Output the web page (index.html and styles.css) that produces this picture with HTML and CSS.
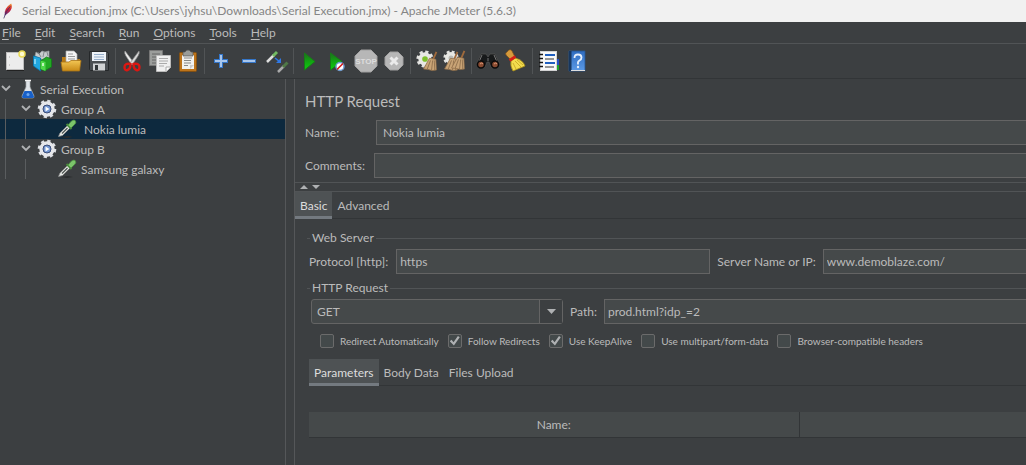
FILE: index.html
```html
<!DOCTYPE html>
<html lang="en">
<head>
<meta charset="utf-8">
<title>Serial Execution.jmx - Apache JMeter (5.6.3)</title>
<link rel="stylesheet" href="styles.css">
</head>
<body>
<svg class="defs" aria-hidden="true">
  <defs>
    <linearGradient id="green" x1="0" y1="0" x2="0" y2="1"><stop offset="0" stop-color="#1d6e1d"/><stop offset=".5" stop-color="#12a512"/><stop offset="1" stop-color="#0fd00f"/></linearGradient>
    <linearGradient id="gold" x1="0" y1="0" x2="0" y2="1"><stop offset="0" stop-color="#f2c654"/><stop offset="1" stop-color="#c98a16"/></linearGradient>
    <linearGradient id="book" x1="0" y1="0" x2="0" y2="1"><stop offset="0" stop-color="#2f6cc0"/><stop offset="1" stop-color="#5c9ae6"/></linearGradient>
    <linearGradient id="quill" x1="0" y1="0" x2="0" y2="1"><stop offset="0" stop-color="#f0902a"/><stop offset=".45" stop-color="#d22235"/><stop offset="1" stop-color="#5d2a80"/></linearGradient>
    <symbol id="gear" viewBox="0 0 20 20">
      <circle cx="10" cy="10" r="8" fill="none" stroke="#dcdee2" stroke-width="2.6" stroke-dasharray="3.2 3.083"/>
      <circle cx="10" cy="10" r="5.9" fill="#3b62a8" stroke="#e6e7ea" stroke-width="3.6"/>
      <circle cx="10" cy="10" r="4" fill="#7396d2" stroke="#3c4d76" stroke-width="1"/>
      <path d="M8.5 7.5v5l4-2.5z" fill="#fff"/>
    </symbol>
    <symbol id="dropper" viewBox="0 0 20 20">
      <path d="M3 18l8-1 5 1-6 1z" fill="#2b2d2e"/>
      <path d="M1.500 17.500l1.500-3.500 8-8 2.500 2.500-8 8z" fill="#e6e9e6" stroke="#888" stroke-width=".7"/>
      <path d="M5 14.500l5.500-5.500" stroke="#4e5452" stroke-width="1.200"/>
      <path d="M9.500 5l5 5" stroke="#4a8a3c" stroke-width="2"/>
      <path d="M11 6l3.500-4q3-2 4 0t-1 3.500L14 9z" fill="#7cc46b" stroke="#4c9440" stroke-width=".8"/>
    </symbol>
    <symbol id="cogwheel" viewBox="0 0 14 14">
      <circle cx="7" cy="7" r="5.500" fill="none" stroke="#e2e2df" stroke-width="2.400" stroke-dasharray="2.400 1.920"/>
      <circle cx="7" cy="7" r="3.700" fill="#7fc02c" stroke="#e8e8e4" stroke-width="3"/>
    </symbol>
    <symbol id="cog-plain" viewBox="0 0 14 14">
      <circle cx="7" cy="7" r="5.500" fill="none" stroke="#e2e2df" stroke-width="2.400" stroke-dasharray="2.400 1.920"/>
      <circle cx="7" cy="7" r="3.700" fill="#b9bab6" stroke="#e8e8e4" stroke-width="3"/>
    </symbol>
    <symbol id="broom" viewBox="0 0 14 18">
      <path d="M12.500 0L9.500 7" stroke="#a06a3c" stroke-width="1.700"/>
      <path d="M6 6l6 1 .5 10-4 .5-3.500-1-4.500-.5z" fill="#c9a476" stroke="#8e6d48" stroke-width=".7"/>
      <path d="M7 8l-3 8M9 8l-1 9M10.500 8l.5 9" stroke="#8b6d4b" stroke-width=".8"/>
    </symbol>
    <symbol id="chevron" viewBox="0 0 12 12"><path d="M2 3l4 4 4-4" fill="none" stroke="#afb1b3" stroke-width="1.800"/></symbol>
  </defs>
</svg>

<header class="titlebar">
  <svg class="app-icon" viewBox="0 0 14 18" aria-hidden="true"><path d="M11 1q2 5-2 9l-5 4Q3 6 11 1z" fill="url(#quill)"/><path d="M10 4Q5 9 3 17" fill="none" stroke="#3b2a60" stroke-width=".8"/></svg>
  <h1 class="title">Serial Execution.jmx (C:\Users\jyhsu\Downloads\Serial Execution.jmx) - Apache JMeter (5.6.3)</h1>
</header>

<nav class="menubar">
  <button class="menu"><u>F</u>ile</button>
  <button class="menu"><u>E</u>dit</button>
  <button class="menu"><u>S</u>earch</button>
  <button class="menu"><u>R</u>un</button>
  <button class="menu"><u>O</u>ptions</button>
  <button class="menu"><u>T</u>ools</button>
  <button class="menu"><u>H</u>elp</button>
</nav>

<div class="toolbar" role="toolbar" aria-label="Main">
  <button class="tool" aria-label="New"><svg viewBox="0 0 24 24"><rect x="3.500" y="3.500" width="17" height="17" fill="#ececec" stroke="#bdbdbd"/><path d="M6 8h1M6 16h1" stroke="#aaa"/><path d="M4 21.500h17" stroke="#222"/><circle cx="19" cy="5" r="3" fill="#fffbd0" stroke="#eadb55" stroke-width="1.500"/></svg></button>
  <button class="tool" aria-label="Templates"><svg viewBox="0 0 24 24"><path d="M4 7l1-4 3 2 3-3 3 1 4-1v7l-6 2z" fill="#c6cbcd" stroke="#92989b" stroke-width=".7"/><path d="M7 3l3 5M13 3l-1 5M16 3l1 4" stroke="#74797c" stroke-width=".8"/><path d="M2.500 7l7 2v13l-7-5z" fill="#21a7df" stroke="#0878b0" stroke-width=".8"/><path d="M4 10v5" stroke="#b7edff" stroke-width="1.200"/><path d="M9.500 12l6-4 5 2v8l-7 4-4-2z" fill="#22a823" stroke="#117c16" stroke-width=".8"/><path d="M9.500 11.500l5 1.500v9l-5-2z" fill="#4fd84a"/><path d="M12 14v3" stroke="#e6ffe2" stroke-width="1.500"/></svg></button>
  <button class="tool" aria-label="Open"><svg viewBox="0 0 24 24"><path d="M3 8h5l2 2h11v11H3z" fill="#b77a16"/><path d="M7 2h8l3 3v11H7z" fill="#f4f4f4" stroke="#aaa" stroke-width=".7"/><path d="M9 5h5M9 7.500h7M9 10h7" stroke="#999"/><path d="M2 13h8l2-1.500h10L20.500 22h-17z" fill="url(#gold)" stroke="#a87315" stroke-width=".8"/></svg></button>
  <button class="tool" aria-label="Save"><svg viewBox="0 0 24 24"><path d="M2.500 2.500h17.500l1.500 2v17h-18l-1-1z" fill="#4b4f53" stroke="#25282a"/><rect x="5" y="3" width="14" height="9" fill="#edf2f8"/><path d="M7 5.500h10M7 8h10M7 10.500h10" stroke="#95aecb"/><rect x="6" y="14.500" width="12" height="7" fill="#d0d2d4"/><rect x="8" y="16" width="3" height="5" fill="#33373a"/></svg></button>
  <span class="sep"></span>
  <button class="tool" aria-label="Cut"><svg viewBox="0 0 24 24"><path d="M5 2q-1 2 1 5l6 9 2-2z" fill="#efefef" stroke="#999" stroke-width=".7"/><path d="M19 2q1 2-1 5l-6 9-2-2z" fill="#dadada" stroke="#888" stroke-width=".7"/><path d="M10.500 15q-6-1-6 3 0 4 3 3 3-1 3-6zM13.500 15q6-1 6 3 0 4-3 3-3-1-3-6z" fill="none" stroke="#dc1712" stroke-width="2.400"/></svg></button>
  <button class="tool" aria-label="Copy"><svg viewBox="0 0 24 24"><path d="M1.500 1.500h13v15h-13z" fill="#9b9d9b" stroke="#777"/><path d="M4 5h8M4 8h6M4 11h5M4 14h4" stroke="#666"/><path d="M8.500 6.500h14v12l-4 4h-10z" fill="#efefef" stroke="#bbb"/><path d="M11 9.500h9M11 12h9M11 14.500h8M11 17h5" stroke="#aaa"/><path d="M18 22v-4h4" fill="#fff" stroke="#aaa"/></svg></button>
  <button class="tool" aria-label="Paste"><svg viewBox="0 0 24 24"><rect x="3.500" y="3.500" width="17" height="19" rx="1" fill="#bd741b" stroke="#825014"/><path d="M6 6h12v14H6z" fill="#f2f2f0"/><path d="M8 9h8M8 11.500h7M8 14h7M8 16.500h4" stroke="#888"/><path d="M14 20v-4h4" fill="#ccc"/><path d="M7 7V3h2q1-2 3-2t3 2h2v4z" fill="#9a9c99" stroke="#555" stroke-width=".7"/></svg></button>
  <span class="sep"></span>
  <button class="tool" aria-label="Expand all"><svg viewBox="0 0 24 24"><path d="M12 5v14M5 12h14" stroke="#3576c8" stroke-width="4"/><path d="M12 6v12M6 12h12" stroke="#a8c6ec" stroke-width="2"/></svg></button>
  <button class="tool" aria-label="Collapse all"><svg viewBox="0 0 24 24"><path d="M5 12h14" stroke="#3576c8" stroke-width="4"/><path d="M6 12h12" stroke="#a8c6ec" stroke-width="2"/></svg></button>
  <button class="tool" aria-label="Toggle"><svg viewBox="0 0 24 24"><path d="M2 13l7-7" stroke="#dedede" stroke-width="2.500"/><path d="M8 7l4-4" stroke="#72ba62" stroke-width="3"/><path d="M10 9l5 4" stroke="#2f79e6" stroke-width="1.600"/><path d="M11 14h5V9z" fill="#2f79e6"/><path d="M13 23l6-6" stroke="#aaa" stroke-width="2.500"/><path d="M18 18l4.500-4.500" stroke="#4f7846" stroke-width="3"/></svg></button>
  <span class="sep"></span>
  <button class="tool" aria-label="Start"><svg viewBox="0 0 24 24"><path d="M6.500 4v17L17 12.500z" fill="url(#green)" stroke="#187b18"/></svg></button>
  <button class="tool" aria-label="Start no pauses"><svg viewBox="0 0 24 24"><path d="M4.500 4v17L16 12.500z" fill="url(#green)" stroke="#187b18"/><circle cx="14" cy="17.500" r="4" fill="#fff" stroke="#6f9cd0" stroke-width="1.500"/><path d="M11 20.500l6-6" stroke="#d31818" stroke-width="1.600"/></svg></button>
  <button class="tool" aria-label="Stop" disabled><svg viewBox="0 0 24 24"><path d="M7 1h10l6 6v10l-6 6H7l-6-6V7z" fill="#b7b7b7" stroke="#a0a0a0"/><text class="stop-text" x="12" y="15" text-anchor="middle">STOP</text></svg></button>
  <button class="tool" aria-label="Shutdown" disabled><svg viewBox="0 0 24 24"><path d="M8 3h8l5 5v8l-5 5H8l-5-5V8z" fill="#b7b7b7" stroke="#a0a0a0"/><path d="M8.500 8.500l7 7M15.500 8.500l-7 7" stroke="#ebebeb" stroke-width="3"/></svg></button>
  <span class="sep"></span>
  <button class="tool" aria-label="Clear"><svg viewBox="0 0 24 24"><use href="#cogwheel" x="1" y="1" width="18" height="18"/><use href="#broom" x="8" y="2" width="15" height="21"/></svg></button>
  <button class="tool" aria-label="Clear all"><svg viewBox="0 0 24 24"><use href="#cog-plain" x="0" y="1" width="16" height="16"/><use href="#broom" x="1" y="2" width="15" height="21"/><use href="#broom" x="8" y="1" width="15" height="21"/></svg></button>
  <span class="sep"></span>
  <button class="tool" aria-label="Search"><svg viewBox="0 0 24 24"><path d="M5 5h5l2 3 2-3h5l4 9-4 4h-4l-2-5h-2l-2 5H5l-4-4z" fill="#17191a" stroke="#555" stroke-width=".7"/><path d="M6 6l-3 7M18 6l3 7M12 9v3" stroke="#777"/><circle cx="5" cy="15.500" r="3.500" fill="#8a4b31" stroke="#0b0b0b" stroke-width="1.500"/><circle cx="19" cy="15.500" r="3.500" fill="#8a4b31" stroke="#0b0b0b" stroke-width="1.500"/><path d="M4 15q2-2 3 0M18 15q2-2 3 0" fill="none" stroke="#dc9978"/></svg></button>
  <button class="tool" aria-label="Reset search"><svg viewBox="0 0 24 24"><path d="M3 3q3-4 5-1l3 6-4 3-5-5q-1-2 1-3z" fill="#d59a3c" stroke="#80501a" stroke-width=".7"/><path d="M11 9q8 2 10 8l-12 5Q6 17 7 12z" fill="#f2dc4e" stroke="#a98e16" stroke-width=".8"/><path d="M11 12l6 6M9 14l3 6M13 11l6 5" stroke="#c2a222" stroke-width=".8"/><path d="M5.500 11.500l6-4" stroke="#d32018" stroke-width="2.800"/></svg></button>
  <span class="sep"></span>
  <button class="tool" aria-label="Function helper"><svg viewBox="0 0 24 24"><path d="M18 10h4v11h-4z" fill="#1fa42a"/><path d="M18 10h4v6h-4z" fill="#2450c4"/><rect x="3.500" y="2.500" width="16" height="19" fill="#f8f8f8" stroke="#d2d2d2"/><path d="M8 6h10M8 14h10" stroke="#1f5fc0" stroke-width="1.800"/><path d="M8 10h9M8 18h9" stroke="#333" stroke-width="1.200"/><path d="M2 5.500h4M2 9.500h4M2 13.500h4M2 17.500h4" stroke="#151515" stroke-width="1.500"/></svg></button>
  <button class="tool" aria-label="Help"><svg viewBox="0 0 24 24"><path d="M4 2h16v20H4z" fill="url(#book)" stroke="#27558f" stroke-width=".8"/><path d="M4 2h2.500v20H4z" fill="#17375f"/><path d="M6 21.500h14" stroke="#ddd"/><path d="M9.500 9q0-3.500 3.500-3.500t3.500 3q0 2-2 3T13 15v.5" fill="none" stroke="#e4effc" stroke-width="1.800"/><circle cx="13" cy="18" r="1.200" fill="#e4effc"/></svg></button>
</div>

<main class="workspace">
  <ul class="tree" role="tree" aria-label="Test plan">
    <li class="row" role="treeitem"><svg class="chev"><use href="#chevron"/></svg><svg class="node root-icon" viewBox="0 0 16 20"><path d="M6 2h4v6l4 9q.5 2-1.500 2h-9q-2 0-1.500-2L6 8z" fill="#dfe4e8" stroke="#a4a9ac" stroke-width=".7"/><path d="M4.500 12h7l2.500 5.500q0 1.500-1.500 1.500h-9q-1.500 0-1.500-1.500z" fill="#1760c9"/><path d="M5 1.500h6" stroke="#f4f4f4" stroke-width="1.500"/><circle cx="8" cy="15.500" r="1.500" fill="#6ba6ef"/></svg><span class="label">Serial Execution</span></li>
    <li class="row" role="treeitem"><span class="guide"></span><svg class="chev"><use href="#chevron"/></svg><svg class="node"><use href="#gear"/></svg><span class="label">Group A</span></li>
    <li class="row selected" role="treeitem" aria-selected="true"><span class="guide"></span><span class="guide"></span><svg class="node leaf"><use href="#dropper"/></svg><span class="label">Nokia lumia</span></li>
    <li class="row" role="treeitem"><span class="guide"></span><svg class="chev"><use href="#chevron"/></svg><svg class="node"><use href="#gear"/></svg><span class="label">Group B</span></li>
    <li class="row" role="treeitem"><span class="guide"></span><span class="guide"></span><svg class="node leaf"><use href="#dropper"/></svg><span class="label">Samsung galaxy</span></li>
  </ul>

  <section class="editor">
    <div class="intro">
      <h2 class="heading">HTTP Request</h2>
      <div class="line"><label class="name-label" for="name">Name:</label><input class="field" id="name" type="text" value="Nokia lumia"></div>
      <div class="line"><label class="comments-label" for="comments">Comments:</label><input class="field" id="comments" type="text"></div>
    </div>
    <div class="splitter">
      <svg class="arrows" viewBox="0 0 20 8" aria-hidden="true"><path d="M0 6l4-4 4 4zM12 2h8l-4 4z" fill="#afb1b3"/></svg>
    </div>
    <div class="tabs" role="tablist">
      <button class="tab active" role="tab" aria-selected="true">Basic</button>
      <button class="tab" role="tab">Advanced</button>
    </div>
    <div class="panel">
      <fieldset class="group">
        <legend>Web Server</legend>
        <div class="server">
          <label for="protocol">Protocol [http]:</label><input class="field tight protocol" id="protocol" type="text" value="https">
          <label class="next" for="server">Server Name or IP:</label><input class="field tight" id="server" type="text" value="www.demoblaze.com/">
        </div>
      </fieldset>
      <fieldset class="group request">
        <legend>HTTP Request</legend>
        <div class="server path-line">
          <span class="combo"><select class="method" aria-label="Method"><option>GET</option></select><svg class="combo-arrow" viewBox="0 0 24 24" aria-hidden="true"><path d="M0 1h23v23H0z" fill="#3c3f41"/><path d="M.5 1v23" stroke="#646464"/><path d="M8 10h9l-4.500 5z" fill="#afb1b3"/></svg></span>
          <label class="next" for="path">Path:</label><input class="field tight" id="path" type="text" value="prod.html?idp_=2">
        </div>
        <div class="checks">
          <label class="check"><input type="checkbox">Redirect Automatically</label>
          <label class="check"><input type="checkbox" checked>Follow Redirects</label>
          <label class="check"><input type="checkbox" checked>Use KeepAlive</label>
          <label class="check"><input type="checkbox">Use multipart/form-data</label>
          <label class="check"><input type="checkbox">Browser-compatible headers</label>
        </div>
      </fieldset>
      <div class="tabs" role="tablist">
        <button class="tab active" role="tab" aria-selected="true">Parameters</button>
        <button class="tab" role="tab">Body Data</button>
        <button class="tab" role="tab">Files Upload</button>
      </div>
      <table class="params">
        <thead><tr><th class="col-name" scope="col">Name:</th><th scope="col" aria-label="Value"></th></tr></thead>
      </table>
    </div>
  </section>
</main>
</body>
</html>
```

FILE: styles.css
```css
* { box-sizing: border-box; }
body {
  margin: 0;
  min-height: 100vh;
  display: flex;
  flex-direction: column;
  background: #3c3f41;
  color: #bbbbbb;
  font: 12px/16px Lato, "Open Sans", sans-serif;
  font-variant-ligatures: none;
  overflow-x: hidden;
}
button, input, select { font: inherit; font-variant-ligatures: none; color: inherit; margin: 0; }
button { border: 0; padding: 0; background: none; }
svg { display: block; flex: none; }
.defs { position: absolute; width: 0; height: 0; }

.titlebar {
  display: flex;
  align-items: center;
  gap: 8px;
  height: 22px;
  padding-left: 1px;
  background: #f1f1f1;
  color: #858585;
}
.app-icon { width: 13px; height: 18px; }
.title { margin: 0; font-size: 12px; font-weight: 400; white-space: nowrap; }

.menubar {
  display: flex;
  gap: 14px;
  height: 22px;
  padding-left: 2px;
  border-bottom: 1px solid #515456;
}
.menu u { text-underline-offset: 2px; }

.toolbar {
  display: flex;
  align-items: center;
  height: 35px;
  padding-left: 1px;
  border-bottom: 1px solid #323537;
}
.tool { width: 28px; height: 28px; padding: 2px; }
.tool svg { width: 24px; height: 24px; }
.sep { width: 1px; height: 26px; margin: 0 2px; background: #515456; }
.stop-text { font: 700 8px "Liberation Sans", sans-serif; fill: #dddddd; }

.workspace { display: flex; flex: 1; }
.tree {
  flex: 0 0 28%;
  max-width: 286px;
  margin: 0;
  padding: 0;
  list-style: none;
  border-right: 1px solid #555759;
}
.row { display: flex; align-items: center; height: 20px; white-space: nowrap; }
.row.selected { background: #0d293e; }
.label { padding-top: 2px; }
.guide { flex: none; width: 20px; height: 20px; border-left: 1px solid #5a5d5f; margin-left: 5px; margin-right: -5px; }
.chev { width: 12px; height: 12px; }
.node { width: 20px; height: 20px; margin: 0 4px 0 5px; }
.root-icon { width: 16px; margin-left: 8px; }
.leaf { margin-left: 17px; }
.selected .leaf { margin-right: 7px; }

.editor { flex: 1; min-width: 0; margin-left: 8px; border-left: 1px solid #555759; }
.intro { padding: 12px 0 4px 10px; }
.heading { margin: 0 0 8px; font-size: 15px; line-height: 21px; font-weight: 400; }
.line { display: flex; align-items: center; margin-bottom: 8px; }
.line:last-child { margin-bottom: 0; }
.name-label { width: 71px; }
.comments-label { width: 69px; }
.field {
  flex: 1;
  min-width: 0;
  height: 25px;
  padding: 0 6px;
  border: 1px solid #646464;
  border-right: 0;
  border-radius: 0;
  background: #45494a;
}
.field.tight { padding: 0 3px; }
.splitter { height: 10px; border: 1px solid #515456; border-width: 1px 0; }
.arrows { width: 20px; height: 8px; margin-left: 5px; }

.tabs { display: flex; border-bottom: 1px solid #323537; }
.tab { height: 27px; margin-bottom: -1px; padding: 4px 5px 0; border-bottom: 3px solid transparent; white-space: nowrap; }
.tab.active { background: #4e5254; color: #dddddd; border-color: #747a80; }

.panel { padding: 11px 0 0 14px; }
.group { min-width: 0; margin: 0 0 0 -2px; padding: 3px 0 0 2px; border: 0 solid #515456; border-top-width: 1px; }
.group legend { margin-left: 1px; padding: 0 2px; }
.server { display: flex; align-items: center; }
.server label { flex: none; }
.protocol { flex: 0 1 314px; margin-left: 8px; border-right: 1px solid #646464; }
.next { margin: 0 7px; }
.request { margin-top: 6px; }
.path-line { padding-left: 2px; }
.combo { position: relative; flex: 0 1 252px; }
.method {
  width: 100%;
  height: 25px;
  padding: 0 5px;
  appearance: none;
  border: 1px solid #646464;
  border-radius: 3px;
  background: #45494a;
  display: block;
}
.combo-arrow { position: absolute; right: 0; top: 0; width: 24px; height: 24px; pointer-events: none; }
.checks { display: flex; gap: 9px; padding: 10px 0 11px 11px; font-size: 10px; line-height: 14px; }
.check { display: flex; align-items: center; gap: 6px; white-space: nowrap; }
.check input {
  appearance: none;
  display: grid;
  place-items: center;
  width: 14px;
  height: 14px;
  border: 1px solid #6b6b6b;
  border-radius: 2px;
  background: #43494a;
}
.check input:checked::before {
  content: "";
  width: 10px;
  height: 10px;
  background: #afb1b3;
  clip-path: polygon(0 52%, 18% 38%, 38% 62%, 82% 0, 100% 12%, 42% 96%);
}
.params { width: 100%; margin-top: 26px; border-collapse: collapse; table-layout: fixed; }
.params th { height: 25px; padding: 2px 0 0; font-weight: 400; background: #45494a; border-bottom: 1px solid #323537; }
.params .col-name { width: 490px; border-right: 1px solid #323537; }
```
